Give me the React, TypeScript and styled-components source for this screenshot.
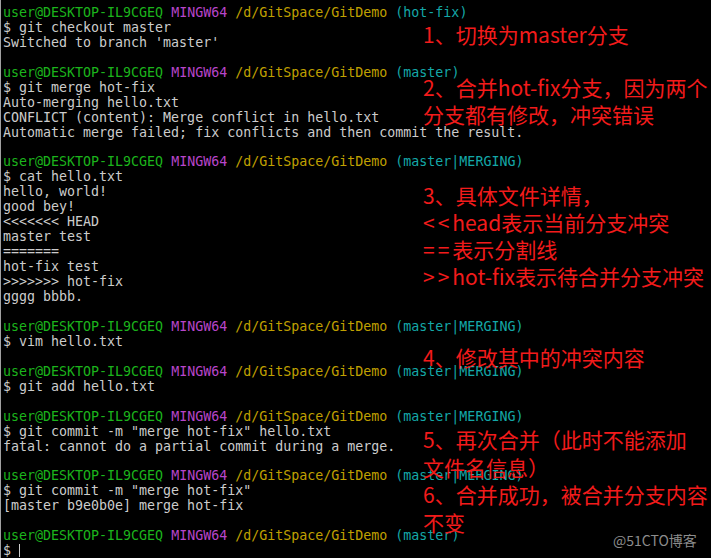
import React from "react";
import styled, { createGlobalStyle } from "styled-components";

const Global = createGlobalStyle`
  html, body { margin: 0; padding: 0; background: #000; }
  body { width: 711px; height: 558px; overflow: hidden; }
`;

const Screen = styled.div`
  position: relative;
  width: 711px;
  height: 558px;
  background: #000;
  overflow: hidden;
`;

const Terminal = styled.div`
  display: flex;
  flex-direction: column;
  height: 100%;
  box-sizing: border-box;
  border-left: 1px solid #a0a0a0;
  padding: 5px 0 0 2px;
  font-family: "DejaVu Sans Mono", "Liberation Mono", monospace;
  font-size: 13.3px;
  line-height: 15px;
  color: #cccccc;
`;

const Line = styled.div`
  height: 15px;
  white-space: pre;
`;

const tone = {
  user: "#1cb41c",
  host: "#b745c9",
  path: "#c0a000",
  branch: "#14a8a8",
};

const Seg = styled.span<{ $tone: keyof typeof tone }>`
  color: ${(p) => tone[p.$tone]};
`;

const Cursor = styled.span`
  display: inline-block;
  width: 0;
  height: 13px;
  border-left: 1px solid #cccccc;
  vertical-align: -2px;
`;

const Prompt: React.FC<{ branch: string }> = ({ branch }) => (
  <Line>
    <Seg $tone="user">user@DESKTOP-IL9CGEQ</Seg>{" "}
    <Seg $tone="host">MINGW64</Seg>{" "}
    <Seg $tone="path">/d/GitSpace/GitDemo</Seg>{" "}
    <Seg $tone="branch">({branch})</Seg>
  </Line>
);

const Note = styled.div<{ $top: number }>`
  position: absolute;
  left: 423px;
  top: ${(p) => p.$top}px;
  font-family: "Microsoft YaHei", "Noto Sans CJK SC", "Noto Sans", sans-serif;
  font-size: 21px;
  line-height: 27px;
  color: #f21b1b;
  white-space: nowrap;
`;

const Wide = styled.span`
  letter-spacing: 3px;
`;

const Watermark = styled.div`
  position: absolute;
  left: 613px;
  top: 530px;
  font-family: "Microsoft YaHei", "Noto Sans CJK SC", sans-serif;
  font-size: 14px;
  line-height: 20px;
  color: #8c8c8c;
  white-space: nowrap;
`;

const M = "master|MERGING";

export default function App() {
  return (
    <Screen>
      <Global />
      <Terminal>
        <Prompt branch="hot-fix" />
        <Line>$ git checkout master</Line>
        <Line>Switched to branch 'master'</Line>
        <Line />
        <Prompt branch="master" />
        <Line>$ git merge hot-fix</Line>
        <Line>Auto-merging hello.txt</Line>
        <Line>CONFLICT (content): Merge conflict in hello.txt</Line>
        <Line>Automatic merge failed; fix conflicts and then commit the result.</Line>
        <Line />
        <Prompt branch={M} />
        <Line>$ cat hello.txt</Line>
        <Line>hello, world!</Line>
        <Line>good bey!</Line>
        <Line>{"<<<<<<< HEAD"}</Line>
        <Line>master test</Line>
        <Line>=======</Line>
        <Line>hot-fix test</Line>
        <Line>{">>>>>>> hot-fix"}</Line>
        <Line>gggg bbbb.</Line>
        <Line />
        <Prompt branch={M} />
        <Line>$ vim hello.txt</Line>
        <Line />
        <Prompt branch={M} />
        <Line>$ git add hello.txt</Line>
        <Line />
        <Prompt branch={M} />
        <Line>$ git commit -m "merge hot-fix" hello.txt</Line>
        <Line>fatal: cannot do a partial commit during a merge.</Line>
        <Line />
        <Prompt branch={M} />
        <Line>$ git commit -m "merge hot-fix"</Line>
        <Line>[master b9e0b0e] merge hot-fix</Line>
        <Line />
        <Prompt branch="master" />
        <Line>
          $ <Cursor />
        </Line>
      </Terminal>

      <Note $top={21}>1、切换为master分支</Note>
      <Note $top={74}>
        2、合并hot-fix分支，因为两个
        <br />
        分支都有修改，冲突错误
      </Note>
      <Note $top={182}>
        3、具体文件详情，
        <br />
        <Wide>&lt;&lt;</Wide>head表示当前分支冲突
        <br />
        <Wide>==</Wide>表示分割线
        <br />
        <Wide>&gt;&gt;</Wide>hot-fix表示待合并分支冲突
      </Note>
      <Note $top={344}>4、修改其中的冲突内容</Note>
      <Note $top={426} style={{ lineHeight: "27.5px" }}>
        5、再次合并（此时不能添加
        <br />
        文件名信息）
        <br />
        6、合并成功，被合并分支内容
        <br />
        不变
      </Note>
      <Watermark>@51CTO博客</Watermark>
    </Screen>
  );
}
